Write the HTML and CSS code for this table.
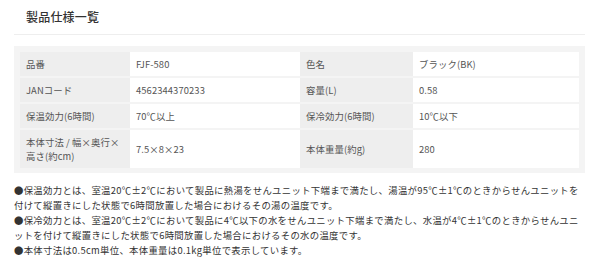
FILE: index.html
```html
<!DOCTYPE html>
<html lang="ja">
<head>
<meta charset="utf-8">
<link rel="stylesheet" href="styles.css">
</head>
<body>
<div class="page">
  <h2 class="title">製品仕様一覧</h2>
  <div class="spec-box">
    <div class="spec-grid">
      <div class="label">品番</div><div class="value">FJF-580</div>
      <div class="label">色名</div><div class="value">ブラック(BK)</div>
      <div class="label">JANコード</div><div class="value">4562344370233</div>
      <div class="label">容量(L)</div><div class="value">0.58</div>
      <div class="label">保温効力(6時間)</div><div class="value">70℃以上</div>
      <div class="label">保冷効力(6時間)</div><div class="value">10℃以下</div>
      <div class="label">本体寸法 / 幅×奥行×高さ(約cm)</div><div class="value">7.5×8×23</div>
      <div class="label">本体重量(約g)</div><div class="value">280</div>
    </div>
  </div>
  <div class="notes">
    <p>●保温効力とは、室温20℃±2℃において製品に熱湯をせんユニット下端まで満たし、湯温が95℃±1℃のときからせんユニットを付けて縦置きにした状態で6時間放置した場合におけるその湯の温度です。</p>
    <p>●保冷効力とは、室温20℃±2℃において製品に4℃以下の水をせんユニット下端まで満たし、水温が4℃±1℃のときからせんユニットを付けて縦置きにした状態で6時間放置した場合におけるその水の温度です。</p>
    <p>●本体寸法は0.5cm単位、本体重量は0.1kg単位で表示しています。</p>
  </div>
</div>
</body>
</html>
```
FILE: styles.css
```css
html, body {
  margin: 0;
  padding: 0;
  background: #ffffff;
}
body {
  font-family: "Noto Sans CJK JP", "Noto Sans", sans-serif;
  color: #333333;
}
.page {
  margin: 0 15px 0 14px;
}
.title {
  margin: 0;
  padding: 6px 12px 7px;
  font-size: 12px;
  line-height: 21px;
  font-weight: 500;
  letter-spacing: 0.2px;
  color: #333333;
  border-bottom: 1px solid #eeeeee;
}
.spec-box {
  margin-top: 11px;
  background: #f4f4f4;
  padding: 6px 6px 5px 6px;
}
.spec-grid {
  display: grid;
  grid-template-columns: 110px 170px 113px 1fr;
  row-gap: 2px;
}
.label, .value {
  font-size: 9.4px;
  line-height: 14px;
  padding: 5px 6px;
  color: #555555;
  letter-spacing: 0.1px;
  display: flex;
  align-items: center;
}
.label {
  background: #eeeeee;
}
.value {
  background: #ffffff;
}
.notes {
  margin-top: 10px;
  font-size: 9.4px;
  line-height: 15px;
  color: #333333;
  letter-spacing: 0.3px;
}
.notes p {
  margin: 0;
}
```
